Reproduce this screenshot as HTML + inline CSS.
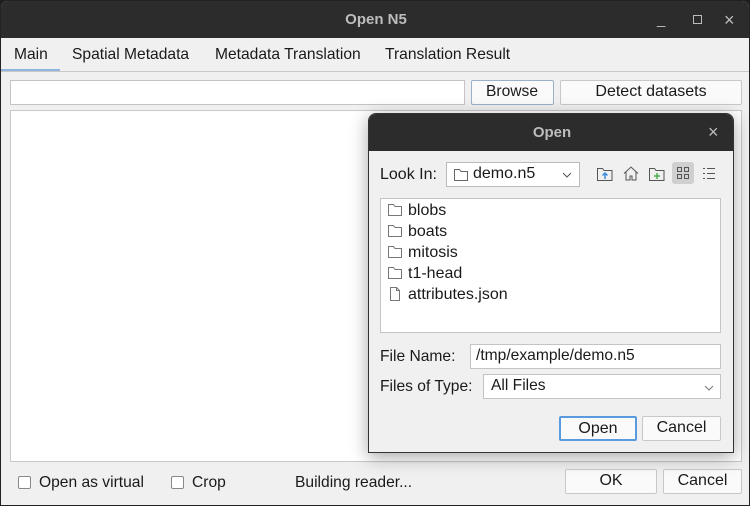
<!DOCTYPE html>
<html><head><style>
*{box-sizing:border-box;margin:0;padding:0}
body{width:750px;height:506px;background:#1e1e1e;font-family:"Liberation Sans",sans-serif;font-size:16px;color:#1a1a1a;position:relative;overflow:hidden}
.win{position:absolute;left:0;top:0;width:750px;height:506px;background:#f0f0f0;border:1px solid #222;border-radius:8px 8px 0 0;overflow:hidden}
.tb{position:absolute;left:0;top:0;width:750px;height:37px;background:#2c2c2c;color:#bdbdbd;font-weight:bold;font-size:15px;text-align:center;line-height:38px}
.a{position:absolute}
.n{transform:scaleX(.975);transform-origin:left;white-space:nowrap}
.btn{position:absolute;background:#fafafa;border:1px solid #c8c8c8;border-radius:2px;text-align:center;line-height:22px}
.fld{position:absolute;background:#fff;border:1px solid #c4c4c4}
.cb{position:absolute;width:13px;height:13px;border:1px solid #888;border-radius:2px;background:#fff}
</style></head><body>
<div class="win">
<div class="tb">Open N5
<span class="a" style="left:656px;top:0;font-weight:normal">_</span>
<span class="a" style="left:692px;top:14px;width:9px;height:9px;border:1px solid #bbb"></span>
<span class="a" style="left:723px;top:0;font-weight:normal;font-size:18px">×</span>
</div>
<div class="a n" style="left:13px;top:45px">Main</div>
<div class="a n" style="left:71px;top:45px">Spatial Metadata</div>
<div class="a n" style="left:214px;top:45px">Metadata Translation</div>
<div class="a n" style="left:384px;top:45px">Translation Result</div>
<div class="a" style="left:0;top:68px;width:59px;height:3px;background:#8fb5dc"></div>
<div class="a" style="left:0;top:70px;width:750px;height:1px;background:#c8c8c8"></div>
<div class="fld" style="left:9px;top:79px;width:455px;height:25px"></div>
<div class="btn" style="left:470px;top:79px;width:83px;height:25px;border-color:#9ab0c8"><span class="n" style="display:inline-block">Browse</span></div>
<div class="btn" style="left:559px;top:79px;width:182px;height:25px">Detect datasets</div>
<div class="fld" style="left:9px;top:109px;width:732px;height:352px;border-color:#c8c8c8"></div>
<div class="cb" style="left:17px;top:475px"></div>
<div class="a n" style="left:38px;top:473px">Open as virtual</div>
<div class="cb" style="left:170px;top:475px"></div>
<div class="a n" style="left:191px;top:473px">Crop</div>
<div class="a n" style="left:294px;top:473px">Building reader...</div>
<div class="btn" style="left:564px;top:468px;width:92px;height:25px">OK</div>
<div class="btn" style="left:662px;top:468px;width:79px;height:25px">Cancel</div>
</div>

<div class="a" style="left:368px;top:113px;width:366px;height:340px;background:#f0f0f0;border:1px solid #333;border-radius:8px 8px 0 0;box-shadow:0 4px 18px rgba(0,0,0,.35);overflow:hidden">
<div class="a" style="left:0;top:0;width:366px;height:37px;background:#2c2c2c;color:#bdbdbd;font-weight:bold;font-size:15px;text-align:center;line-height:38px">Open<span class="a" style="left:339px;top:-1px;font-weight:normal;font-size:18px">×</span></div>
<div class="a" style="left:11px;top:52px">Look In:</div>
<div class="fld" style="left:77px;top:48px;width:134px;height:25px;border-color:#bbb">
<svg class="a" style="left:7px;top:5px" width="14" height="13"><path d="M0.5 1.5h5l1.5 2h6.5v9h-13z" fill="none" stroke="#666"/></svg>
<span class="a" style="left:26px;top:2px">demo.n5</span>
<svg class="a" style="left:115px;top:9px" width="10" height="6"><path d="M1 1l4 4 4-4" fill="none" stroke="#555"/></svg>
</div>
<svg class="a" style="left:228px;top:53px" width="16" height="14"><path d="M0.5 1.5h5l1.5 2h8v10h-14.5z" fill="none" stroke="#555"/><path d="M8 12V6M5.5 8.5L8 6l2.5 2.5" stroke="#3a8ee0" stroke-width="1.5" fill="none"/></svg>
<svg class="a" style="left:254px;top:52px" width="16" height="15"><path d="M1 7.5L8 1l7 6.5M3 6v8h4v-4h2v4h4V6" fill="none" stroke="#555"/></svg>
<svg class="a" style="left:280px;top:53px" width="16" height="14"><path d="M0.5 1.5h5l1.5 2h8v10h-14.5z" fill="none" stroke="#555"/><path d="M8 6v6M5 9h6" stroke="#4caf50" stroke-width="1.5"/></svg>
<div class="a" style="left:303px;top:48px;width:22px;height:22px;background:#d0d0d0;border-radius:3px"></div>
<svg class="a" style="left:307px;top:52px" width="14" height="14"><g fill="none" stroke="#555"><rect x="1.5" y="1.5" width="4" height="4"/><rect x="8.5" y="1.5" width="4" height="4"/><rect x="1.5" y="8.5" width="4" height="4"/><rect x="8.5" y="8.5" width="4" height="4"/></g></svg>
<svg class="a" style="left:333px;top:53px" width="14" height="13"><g stroke="#555"><path d="M1 1.5h2M5 1.5h8M1 6.5h2M5 6.5h8M1 11.5h2M5 11.5h8"/></g></svg>
<div class="fld" style="left:11px;top:84px;width:341px;height:135px;border-color:#c4c4c4">
<div style="position:absolute;left:7px;top:1px;line-height:21px">
<div><svg width="14" height="12" style="vertical-align:-1px;margin-right:6px"><path d="M0.5 0.5h5l1.5 2h6.5v9h-13z" fill="none" stroke="#777"/></svg>blobs</div>
<div><svg width="14" height="12" style="vertical-align:-1px;margin-right:6px"><path d="M0.5 0.5h5l1.5 2h6.5v9h-13z" fill="none" stroke="#777"/></svg>boats</div>
<div><svg width="14" height="12" style="vertical-align:-1px;margin-right:6px"><path d="M0.5 0.5h5l1.5 2h6.5v9h-13z" fill="none" stroke="#777"/></svg>mitosis</div>
<div><svg width="14" height="12" style="vertical-align:-1px;margin-right:6px"><path d="M0.5 0.5h5l1.5 2h6.5v9h-13z" fill="none" stroke="#777"/></svg>t1-head</div>
<div><svg width="14" height="14" style="vertical-align:-2px;margin-right:6px"><path d="M2.5 0.5h6l3 3v10h-9zM8.5 0.5v3h3" fill="none" stroke="#777"/></svg>attributes.json</div>
</div></div>
<div class="a n" style="left:11px;top:234px">File Name:</div>
<div class="fld" style="left:101px;top:230px;width:251px;height:25px;padding:2px 5px"><span class="n" style="display:inline-block">/tmp/example/demo.n5</span></div>
<div class="a n" style="left:11px;top:264px">Files of Type:</div>
<div class="fld" style="left:114px;top:260px;width:238px;height:25px;border-color:#c4c4c4;padding:2px 7px"><span class="n" style="display:inline-block">All Files</span>
<svg class="a" style="left:220px;top:10px" width="10" height="6"><path d="M1 1l4 4 4-4" fill="none" stroke="#777"/></svg></div>
<div class="btn" style="left:190px;top:302px;width:78px;height:25px;border:2px solid #5a9be0;line-height:21px">Open</div>
<div class="btn" style="left:273px;top:302px;width:79px;height:25px">Cancel</div>
</div>
</body></html>
